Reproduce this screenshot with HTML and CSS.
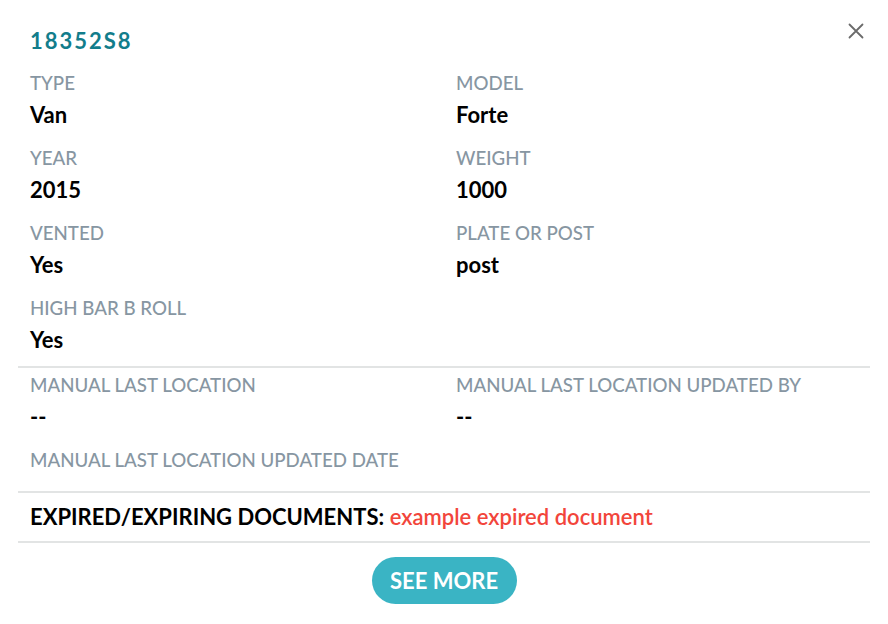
FILE: index.html
```html
<!DOCTYPE html>
<html lang="en">
<head>
    <meta charset="UTF-8">
    <meta name="viewport" content="width=device-width, initial-scale=1.0">
    <title>18352S8</title>
    <link rel="stylesheet" href="styles.css">
</head>
<body>
    <div class="popup">
        <button class="close-btn" aria-label="Close">
            <svg width="16" height="16" viewBox="0 0 16 16">
                <path d="M1.5 1.5 L14.5 14.5 M14.5 1.5 L1.5 14.5" stroke="#6b6b6b" stroke-width="1.8" stroke-linecap="round"/>
            </svg>
        </button>

        <h2 class="unit-id">18352S8</h2>

        <div class="fields">
            <div class="field">
                <div class="label">TYPE</div>
                <div class="value">Van</div>
            </div>
            <div class="field">
                <div class="label">MODEL</div>
                <div class="value">Forte</div>
            </div>
            <div class="field">
                <div class="label">YEAR</div>
                <div class="value">2015</div>
            </div>
            <div class="field">
                <div class="label">WEIGHT</div>
                <div class="value">1000</div>
            </div>
            <div class="field">
                <div class="label">VENTED</div>
                <div class="value">Yes</div>
            </div>
            <div class="field">
                <div class="label">PLATE OR POST</div>
                <div class="value">post</div>
            </div>
            <div class="field">
                <div class="label">HIGH BAR B ROLL</div>
                <div class="value">Yes</div>
            </div>
        </div>

        <div class="fields location">
            <div class="field">
                <div class="label">MANUAL LAST LOCATION</div>
                <div class="value">--</div>
            </div>
            <div class="field">
                <div class="label">MANUAL LAST LOCATION UPDATED BY</div>
                <div class="value">--</div>
            </div>
            <div class="field">
                <div class="label">MANUAL LAST LOCATION UPDATED DATE</div>
            </div>
        </div>

        <div class="documents">
            <strong>EXPIRED/EXPIRING DOCUMENTS:</strong>
            <span class="expired">example expired document</span>
        </div>

        <div class="actions">
            <button class="see-more">SEE MORE</button>
        </div>
    </div>
</body>
</html>
```

FILE: styles.css
```css
body {
    margin: 0;
    background: #fff;
    font-family: Lato, 'Open Sans', sans-serif;
    color: #000;
}

.popup {
    position: relative;
    width: 852px;
    margin: 0 18px;
    padding-top: 26px;
}

.close-btn {
    position: absolute;
    top: 23px;
    right: 6px;
    width: 16px;
    height: 16px;
    padding: 0;
    border: none;
    background: none;
    cursor: pointer;
    line-height: 0;
}

.unit-id {
    margin: 0 0 13px 12px;
    font-size: 22px;
    line-height: 30px;
    font-weight: 700;
    letter-spacing: 2px;
    color: #127d8b;
}

.fields {
    display: grid;
    grid-template-columns: 1fr 1fr;
    row-gap: 11px;
    padding-bottom: 8px;
    border-bottom: 2px solid #e2e4e4;
}

.fields.location {
    padding-top: 3px;
    padding-bottom: 17px;
}

.field {
    padding: 0 12px;
}

.label {
    font-size: 18.7px;
    line-height: 28px;
    font-weight: 500;
    color: #8796a2;
}

.value {
    font-size: 22px;
    line-height: 36px;
    font-weight: 700;
}

.documents {
    padding: 0 12px;
    font-size: 22px;
    line-height: 48px;
    border-bottom: 2px solid #e2e4e4;
}

.documents strong {
    font-weight: 700;
}

.expired {
    color: #f2453b;
    font-weight: 600;
}

.actions {
    display: flex;
    justify-content: center;
    padding-top: 14px;
}

.see-more {
    width: 145px;
    height: 47px;
    border: none;
    border-radius: 24px;
    background: #3ab4c4;
    color: #fff;
    font-family: Lato, 'Open Sans', sans-serif;
    font-size: 22px;
    font-weight: 700;
    cursor: pointer;
}
```
